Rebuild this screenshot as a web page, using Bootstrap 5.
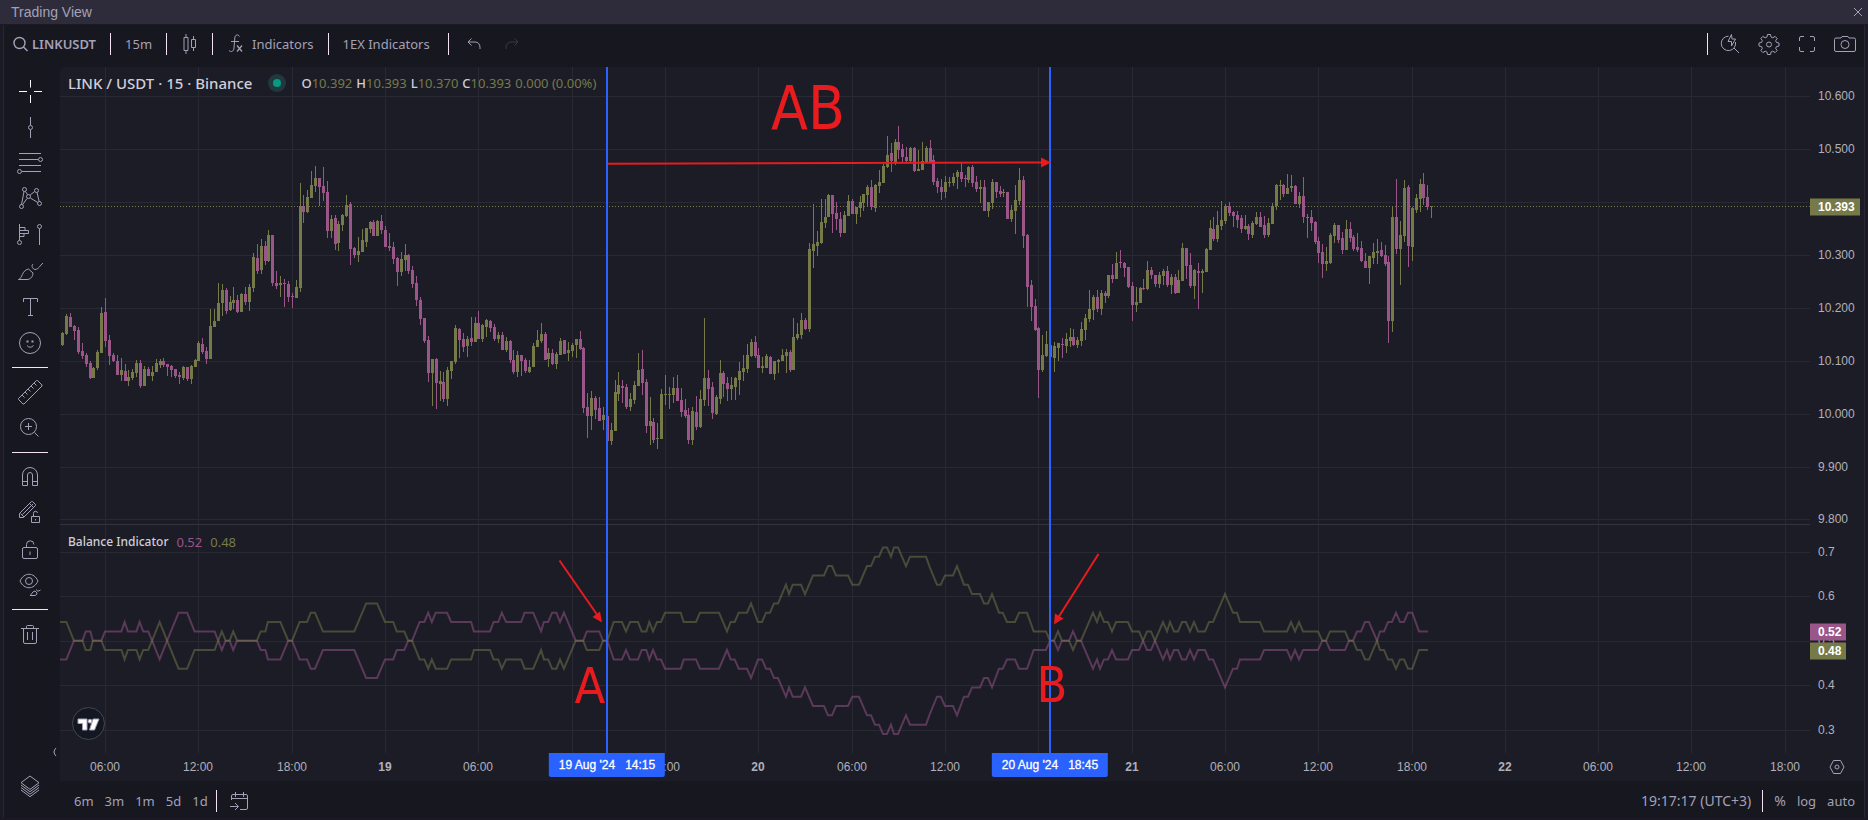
<!DOCTYPE html>
<html lang="en">
<head>
<meta charset="utf-8">
<meta name="viewport" content="width=device-width, initial-scale=1">
<title>Trading View</title>
<link href="https://cdn.jsdelivr.net/npm/bootstrap@5.3.0/dist/css/bootstrap.min.css" rel="stylesheet">
<style>
:root{--ink:#a3a1b8;--panel:#171720;--plot:#1c1c27;--grid:#292934;--edge:#272632;--up:#767a49;--down:#9a5589;--blue:#2962ff;--red:#e81b1e}
body{background:#1a1924;color:var(--ink);font-family:"Noto Sans",sans-serif;font-size:13px;line-height:20px}
svg{display:block;fill:none;stroke:currentColor}
button{color:inherit;background:none;border:0;padding:0;font:inherit;white-space:nowrap}
.titlebar{height:24px;background:#2e2c3a;padding:0 4px 0 11px;font:14px/24px "Liberation Sans",sans-serif}
.frame{margin:1px 3px 2px;border:1px solid var(--edge);border-width:0 1px;background:var(--panel);min-height:0}
.toolbar{height:42px;padding:0 8px 4px 8px}
.rule{width:1px;height:22px;background:#f6e2f4;flex:none}
.gap-rule{margin:0 14px}
.tools-end{gap:18px}
.sidebar{width:56px;padding:6px 12px 15px 8px}
.sidebar hr{width:36px;height:1px;margin:6px 0;border:0;background:#f6e2f4;opacity:1;flex:none}
.sidebar button{width:36px;height:36px;flex:none}
.collapse-btn{left:46px;bottom:58px;width:8px!important;height:16px!important}
.chart{display:grid;grid-template-columns:minmax(0,1fr) 54px;grid-template-rows:minmax(0,1fr) 28px;background:var(--plot);border-top-left-radius:5px}
.axis{font:12px/16px "Liberation Sans",sans-serif;color:#b0b0ba}
.axis span{position:absolute;white-space:nowrap}
.price span{left:0;padding-left:8px;transform:translateY(-50%)}
.price .tag{color:#fff;font-weight:700;line-height:17px;padding-right:5px}
.time span{top:6px;transform:translateX(-50%)}
.time .tag{top:0;background:var(--blue);color:#fff;line-height:24px;padding:0 10px;white-space:pre;border-radius:0 0 2px 2px;-webkit-text-stroke:.3px}
.legend{left:8px;top:6px}
.legend h1{font-size:15px;line-height:20px;font-weight:500;color:#cfced9;margin:0 16px 0 0}
.legend b,.study b{font-weight:500;color:#cfced9}
.study b{font-size:12px}
.status{width:18px;height:18px;background:#20393f;margin-right:15px}
.status i{width:8px;height:8px;background:#089981}
.ohlc{gap:4px}
.study{left:8px;top:68%;margin-top:-1px;gap:8px}
.up{color:var(--up)}.down{color:var(--down)}
.logo{left:12px;bottom:13px;width:33px;height:33px;background:#131722;border:1px solid #454651;border-radius:50%}
.note{position:absolute;transform:translate(-50%,-50%);color:var(--red);font-family:"DejaVu Sans Condensed","DejaVu Sans Mono",sans-serif;font-stretch:normal;line-height:1}
.note-lg{font-size:60px}.note-sm{font-size:50px}
.footer-bar{height:37px;padding:3px 9px 0 14px}
.foot-group{gap:11px}
.clock{font-size:14px}
</style>
</head>
<body class="d-flex flex-column vh-100 overflow-hidden">
<header class="titlebar d-flex justify-content-between align-items-center flex-shrink-0">
  <span>Trading View</span>
  <button aria-label="Close"><svg width="12" height="12"><path d="M2 2l8 8M10 2l-8 8"/></svg></button>
</header>
<main class="frame d-flex flex-column flex-grow-1">
  <nav class="toolbar d-flex align-items-center flex-shrink-0">
    <button class="d-flex align-items-center fw-semibold"><svg class="me-1" width="16" height="18"><circle cx="7.500" cy="8" r="5.500" stroke-width="1.400"/><path d="M11.500 12l4 4" stroke-width="1.400"/></svg>LINKUSDT</button>
    <span class="rule gap-rule"></span>
    <button>15m</button>
    <span class="rule gap-rule"></span>
    <button aria-label="Candles"><svg width="17" height="22"><path d="M5 1v3M5 18v3M12.500 3v3M12.500 15v3"/><path d="M3 4.500h4v13H3zM10.500 6.500h4v8h-4z"/></svg></button>
    <span class="rule gap-rule"></span>
    <button class="d-flex align-items-center"><svg class="me-2" width="17" height="22"><path d="M12.500 3.500C11 1 8 1.500 7.800 5L7 15c-.2 3.500-3 4.500-5 2.500M4 8.500h8"/><path d="M10 12.500l5 6M15 12.500l-5 6" stroke-width="1.300"/></svg>Indicators</button>
    <span class="rule gap-rule"></span>
    <button class="pe-1">1EX Indicators</button>
    <span class="rule gap-rule"></span>
    <button aria-label="Undo" class="ms-1"><svg width="14" height="14"><path d="M4.500 1.500L1 5l3.500 3.500M1 5h7c3 0 5 2 5 5.500V12"/></svg></button>
    <button aria-label="Redo" class="ms-4 opacity-25"><svg width="14" height="14"><path d="M9.500 1.500L13 5 9.500 8.500M13 5H6c-3 0-5 2-5 5.500V12"/></svg></button>
    <div class="tools-end ms-auto d-flex align-items-center">
      <div class="d-flex align-items-center gap-2"><span class="rule me-1"></span>
      <button aria-label="Quick search"><svg width="20" height="22"><path d="M8.500 3.200A7.200 7.200 0 1 0 15.500 9M14 15l5 5M11.500 1.500L8 8.500h3.500v4.500l4-7H12z"/></svg></button></div>
      <button aria-label="Settings"><svg width="22" height="22"><path d="M9.500 1.500h3l.6 2.600 1.700.7 2.300-1.400 2 2-1.400 2.300.7 1.700 2.600.6v3l-2.600.6-.7 1.700 1.400 2.300-2 2-2.300-1.400-1.700.7-.6 2.600h-3l-.6-2.600-1.700-.7-2.300 1.400-2-2 1.400-2.300-.7-1.700L1 13v-3l2.600-.6.7-1.700-1.400-2.300 2-2 2.300 1.400 1.700-.7z"/><circle cx="11" cy="11.500" r="2.500"/></svg></button>
      <button aria-label="Fullscreen"><svg width="18" height="18"><path d="M1.500 6V3a1.500 1.500 0 0 1 1.500-1.500h3M12 1.500h3A1.500 1.500 0 0 1 16.500 3v3M16.500 12v3a1.500 1.500 0 0 1-1.500 1.500h-3M6 16.500H3A1.500 1.500 0 0 1 1.500 15v-3"/></svg></button>
      <button aria-label="Snapshot"><svg width="22" height="18"><path d="M7 3l1-1.500h6L15 3h5a1.500 1.500 0 0 1 1.500 1.500V15a1.500 1.500 0 0 1-1.500 1.500H2A1.500 1.500 0 0 1 .5 15V4.500A1.500 1.500 0 0 1 2 3z"/><circle cx="11" cy="9.500" r="4"/></svg></button>
    </div>
  </nav>
  <div class="d-flex flex-grow-1" style="min-height:0">
    <aside class="sidebar position-relative d-flex flex-column flex-shrink-0">
      <button aria-label="Cross" class="text-white"><svg width="36" height="36"><path d="M18.500 7v7.500M18.500 22v8M7 18.500h8M22 18.500h8"/></svg></button>
      <button aria-label="Trend line"><svg width="36" height="36"><path d="M18.500 8v8M18.500 21v8"/><circle cx="18.500" cy="18.500" r="2"/></svg></button>
      <button aria-label="Fibonacci"><svg width="36" height="36"><path d="M7 8.500h22M7 14.500h19M7 20.500h22M10 26.500h19"/><circle cx="28.500" cy="14.500" r="2"/><circle cx="7.500" cy="26.500" r="2"/></svg></button>
      <button aria-label="Patterns"><svg width="36" height="36"><path d="M12 10.500l-2.500 13M13.500 10.500l2 3M18.200 14l4.500-3.500M25 11.500l2.200 9M18.300 17l7.500 4.500M15 17.500l-4.500 6.300"/><circle cx="12.500" cy="8.500" r="2"/><circle cx="24.500" cy="9.500" r="2"/><circle cx="16.500" cy="15.500" r="2"/><circle cx="9.500" cy="25.500" r="2"/><circle cx="27.500" cy="22.500" r="2"/></svg></button>
      <button aria-label="Position"><svg width="36" height="36"><path d="M7.500 7v16.500M8 10.500h5v3H8M13 13.500h3.500v3H8M12 16.500v3H8M27.500 12v16"/><circle cx="7.500" cy="25.500" r="2"/><circle cx="27.500" cy="9.500" r="2"/></svg></button>
      <button aria-label="Brush"><svg width="36" height="36"><path d="M6.500 26.500c4-1 3-9 10-10.500l4.500 4c0 4-3 6.500-6 6.500zM21 11c-2 2-.5 5 2 5.500 3.500 0 5-4 8-6.500"/></svg></button>
      <button aria-label="Text"><svg width="36" height="36"><path d="M11.500 13V9.500h14V13M18.500 9.500v17M16 26.500h5"/></svg></button>
      <button aria-label="Emoji"><svg width="36" height="36"><circle cx="18" cy="18" r="10.500"/><path d="M15 20.500q3 3.500 6.500 0"/><path d="M14.500 16.500h2M19.500 16.500h2" stroke-width="2"/></svg></button>
      <hr>
      <button aria-label="Measure"><svg width="36" height="36"><path d="M6.500 24.500l18-18h1l4.500 4.500v1l-18 18h-1l-4.500-4.500zM10 21l2.500 2.500M13 18l2.500 2.500M16 15l2.500 2.500M19 12l2.500 2.500M22 9l2.500 2.500"/></svg></button>
      <button aria-label="Zoom in"><svg width="36" height="36"><circle cx="16.500" cy="16.500" r="8"/><path d="M22.500 22.500l4 4M13 16.500h7M16.500 13v7"/></svg></button>
      <hr>
      <button aria-label="Magnet"><svg width="36" height="36"><path d="M10.500 26.500V16a7.500 7.500 0 0 1 15 0v10.500h-5V16a2.500 2.500 0 0 0-5 0v10.500zM10.500 22.500h5M20.500 22.500h5"/></svg></button>
      <button aria-label="Stay in drawing mode"><svg width="36" height="36"><path d="M7.500 22.500v-4L19.500 6.500h1L23.500 9.500v1l-12 12zM8.500 18.500l3.500 3.500M10.500 19.500L21 9M17.500 8.500l4 4M19.500 21.500h8v6h-8zM21.500 21.500v-3a2 2 0 0 1 4-.5M23.500 24v1.500"/></svg></button>
      <button aria-label="Lock drawings"><svg width="36" height="36"><rect x="10.500" y="16.500" width="15" height="11" rx="1.500"/><path d="M14.500 16.500v-3a3.700 3.700 0 0 1 7.400 0M18 20.500v3.500"/></svg></button>
      <button aria-label="Hide drawings"><svg width="36" height="36"><path d="M8 14c4-9 14-9 18 0-4 9-14 9-18 0z"/><circle cx="17" cy="14" r="3.500"/><path d="M18 28.500c2-.5 1.500-4 5-4.500l2 2c0 2-1.500 2.500-3 2.500zM24.500 22.500c0 2 2 2 4 .5" /></svg></button>
      <hr>
      <button aria-label="Remove"><svg width="36" height="36"><path d="M9 12.500h18M14.500 12.500v-2q0-1 1-1h5q1 0 1 1v2M11.500 12.500v13.500q0 1.500 1.500 1.500h10q1.500 0 1.500-1.500V12.500M15.500 16v8M20.500 16v8"/></svg></button>
      <button aria-label="Collapse" class="collapse-btn position-absolute"><svg width="8" height="16"><path d="M6 4Q2 8 6 12"/></svg></button>
      <button aria-label="Object tree" class="mt-auto"><svg width="36" height="36"><path d="M18 9l9 6.700-9 6.700-9-6.700zM9 18l9 6.700 9-6.700M9 20.500l9 6.700 9-6.700M9 23l9 6.700 9-6.700"/></svg></button>
    </aside>
    <section class="d-flex flex-column flex-grow-1">
      <div class="chart flex-grow-1">
        <div class="position-relative overflow-hidden" id="plot">
          <svg id="canvas" class="w-100 h-100" viewBox="60 67 1750 686" preserveAspectRatio="none"></svg>
          <div class="legend position-absolute d-flex align-items-center">
            <h1>LINK / USDT · 15 · Binance</h1>
            <span class="status rounded-circle d-flex align-items-center justify-content-center"><i class="rounded-circle"></i></span>
            <div class="ohlc d-flex up"><span><b>O</b>10.392</span><span><b>H</b>10.393</span><span><b>L</b>10.370</span><span><b>C</b>10.393</span><span>0.000 (0.00%)</span></div>
          </div>
          <div class="study position-absolute d-flex"><b>Balance Indicator</b><span class="down">0.52</span><span class="up">0.48</span></div>
          <div class="logo position-absolute"><svg width="31" height="31" stroke="none"><path fill="#fff" d="M5 11h9v11H9.500v-6.500H5zM20 11h6l-4.500 11h-5z"/><circle cx="17" cy="13.200" r="1.900" fill="#fff"/></svg></div>
        </div>
        <div class="axis price position-relative" id="prices"></div>
        <div class="axis time position-relative" id="times"></div>
        <button aria-label="Axis settings" class="d-flex justify-content-center align-items-center"><svg width="18" height="16"><path d="M5.500 1.500h7l3.500 6.500-3.500 6.500h-7L2 8z"/><circle cx="9" cy="8" r="2"/></svg></button>
      </div>
      <footer class="footer-bar d-flex align-items-center flex-shrink-0">
        <div class="foot-group d-flex"><button>6m</button><button>3m</button><button>1m</button><button>5d</button><button>1d</button></div>
        <span class="rule mx-2"></span>
        <button aria-label="Go to date" class="ms-1"><svg width="20" height="20"><path d="M2.500 9V5A1.500 1.500 0 0 1 4 3.500h13A1.500 1.500 0 0 1 18.500 5v12a1.500 1.500 0 0 1-1.500 1.500h-6M2.500 7.500h16M6.500 1v5M14.500 1v5M1 15.500h8M6 12l3.500 3.500L6 19"/></svg></button>
        <div class="foot-group ms-auto d-flex align-items-center"><button class="clock">19:17:17 (UTC+3)</button><span class="rule"></span><button class="clock">%</button><button>log</button><button>auto</button></div>
      </footer>
    </section>
  </div>
</main>
<script src="https://cdn.jsdelivr.net/npm/bootstrap@5.3.0/dist/js/bootstrap.bundle.min.js"></script>
<script>
// Plot space: x 60..1810, y 67..753. Candle rows hold high, body top, body bottom and low in thirds of a unit.
const candles=[
[450,`u546 549 585 588|u492 498 552 555|d489 501 531 531|d525 528 543 570|d531 540 606 612|d579 603 618 627|d609 615 642 651|d633 639 684 687|u651 654 684 684|u600 606 654 660|u471 489 609 609|d444 486 573 591|d555 570 618 645|d609 615 633 636|d615 633 675 675|u624 660 675 693|d642 663 693 693|u660 681 693 708|u657 666 684 690|u630 639 669 681|d630 639 708 714|u648 657 708 708|d651 657 678 678|u648 666 678 693|u627 639 666 666|u627 633 645 654|d624 633 645 651|d642 642 651 678|d645 648 660 681|d657 657 678 684|d666 675 681 702|u648 651 684 690|d651 651 687 693|u645 648 687 702|u627 630 651 651|u573 579 633 633|d564 582 606 612|d591 603 627 642|u477 528 627 627|u477 513 531 531|u399 459 513 513|u402 420 459 498|d414 420 483 492|u438 456 480 483|u411 450 459 477|d435 450 486 489|u429 432 486 486|d411 432 456 465|u402 411 456 483|u309 321 414 426|d282 324 363 372|u267 288 360 372|d273 288 333 345|u240 255 333 336|d255 255 399 408|d363 399 408 417|u378 399 405 441|d387 399 402 471|d393 402 441 456|d429 438 441 474|u390 411 444 444|u99 168 414 426|d135 168 186 219|u120 141 186 189|u63 105 144 144|u48 84 108 126|d84 84 111 168|d51 108 129 153|d93 126 243 264|u195 207 243 264|d195 204 282 300|u213 222 279 303|u192 195 225 243|u135 165 198 201|d156 162 297 345|d291 294 315 324|u261 303 315 336|u237 270 306 306|u234 234 276 291|u213 216 237 249|d210 216 258 258|u210 213 258 258|d195 213 240 252|d228 240 291 291|d249 288 294 303|d276 291 327 342|d321 324 366 408|u306 327 366 378|u282 315 330 363|d312 315 363 372|d348 360 402 414|d378 399 450 468`],
[840,`d51 60 117 135|d114 114 183 189|d168 180 279 306|u237 237 279 378|d234 237 309 387|u273 303 312 363|d276 306 357 366|u261 270 357 378|u243 243 273 297|u135 144 246 252|d144 147 180 234|d159 177 201 216|u168 177 198 231|d111 174 186 198|u111 129 186 186|d93 129 177 177|u132 135 177 186|u117 120 141 171|d120 123 144 156|d132 141 177 183|u156 165 177 189|d156 165 210 210|u171 183 210 216|d180 183 240 249|d210 240 276 282|u213 225 276 291|d225 225 243 288|d234 240 273 279|u240 261 276 279|u189 198 261 261|u150 180 201 201|u129 162 183 189|d156 162 240 240|u204 219 237 261|d207 219 252 255|u216 222 252 267|u174 183 225 225|d180 180 222 222|u186 210 219 243|u189 195 213 231|u177 177 195 234|d153 177 207 210|d201 204 384 399|d339 381 408 474|u333 354 408 450|d348 354 390 417|d351 384 423 423|u381 405 420 450|d408 408 483 483|u429 450 483 495|u300 336 453 453|u276 315 342 363|d300 318 324 369|d312 321 381 387|u339 357 381 393|u303 315 360 372|u219 270 318 318|d210 267 309 345|d297 306 438 459|u351 423 438 495|d414 426 480 489|u429 474 477 507|u327 342 477 477|u285 342 345 375|u321 342 345 387|u291 324 345 369|d285 324 363 363|d324 360 396 411|d357 390 408 414|d384 405 480 492|u381 393 480 495|d348 396 441 450|u330 357 441 444|u114 294 360 378|d270 294 327 378|d306 321 399 417|u345 351 402 405|u240 279 357 372|d273 279 312 351|d291 309 327 363|u291 315 327 360|u291 294 321 360|u246 273 300 345|u225 264 276 303|u192 225 267 279|u177 186 228 231|d168 186 228 234|d204 225 264 264`],
[210,`u861 888 894 909|u852 858 894 894|d858 861 912 912|u873 873 912 930|u867 870 876 909|u837 855 873 873|u837 846 858 909|d840 846 900 906|u744 801 900 900|u759 792 804 810|u729 750 795 807|d744 750 777 780|u519 537 777 786|u402 522 543 594|u483 516 528 558|u387 456 519 522|u387 441 459 474|u372 375 441 441|d375 375 432 489|d396 429 447 480|d426 447 489 501|u423 435 489 489|u375 393 438 438|d387 393 432 432|u411 411 432 462|u378 396 414 441|u372 372 399 423|u345 351 375 408|d330 351 411 420|u342 345 414 426|u300 336 348 369|u282 288 339 339|u198 255 291 294|d219 249 273 306|u207 216 279 285|d168 216 240 267|d222 237 261 276|d231 261 273 276|u231 234 273 276|d231 234 303 306|u240 297 303 303|u216 273 300 300|u228 234 276 276|d210 234 276 279|d255 270 336 345|d324 333 351 369|d327 351 366 390|u318 336 366 384|u321 336 339 351|u309 321 339 348|u300 306 321 357|d279 306 327 336|d315 324 327 351|u288 291 330 339|d285 291 339 351|d318 336 357 366|u330 351 357 399|d330 351 423 423|u396 396 423 441|u327 336 399 417|d336 336 366 384|d348 363 372 381|u357 366 369 381|d366 366 447 447|u405 420 447 456|u345 390 423 492|u294 330 393 405|d318 330 498 534|d492 495 651 711|d630 645 711 753|d687 708 780 783|d771 774 900 984|u795 855 900 906|u783 822 858 861`],
[450,`d585 585 621 621|u576 588 624 666|u579 579 594 633|d564 582 585 624|u549 567 588 609|u534 561 573 591|d537 561 585 588|u561 570 585 594|u516 537 573 588|u492 504 540 570|u420 477 507 516|u435 441 480 510|d420 441 477 486|u420 429 477 495|d423 429 438 459|u375 375 438 444|d342 375 387 399|u306 339 387 387|d300 336 339 354|d336 339 354 381|d351 351 411 414|d396 408 465 513|u411 456 465 486|u411 414 459 459|d387 414 417 420|u333 360 417 420|d351 360 375 387|d375 375 402 411|u366 375 402 414|u357 363 378 405|d348 363 405 411|u372 381 405 432|d372 381 429 432|u360 390 429 429|u279 294 393 393|d294 294 348 387|d309 345 408 414|u357 360 408 447|d339 363 369 477|u357 363 369 429|u294 297 366 366|u210 234 300 300|d201 237 267 273|u183 225 267 276|u153 210 228 240|u162 168 213 222|d156 168 189 198|d183 186 198 231|d183 195 210 234|d195 204 237 249|u195 228 237 240|d222 228 252 270|u213 219 255 264|u186 201 222 225|d186 201 231 231|d198 225 255 264|u204 219 255 261|u159 168 222 222|u102 105 168 180|u90 105 108 150|d102 105 132 141|u72 114 132 132|u75 108 114 126|d105 108 162 162|u126 138 162 174|d81 138 201 219|u192 201 204 264|d180 201 219 243|d213 216 276 282|d261 273 309 339|d282 306 342 384|u291 333 342 363|u249 255 339 342|u219 225 258 279|d225 225 270 279|d246 264 300 312|u210 237 300 300|d216 237 264 276|d255 261 297 303|d249 291 300 306|d273 294 333 336|d309 333 354 354|u318 318 354 402|u279 306 324 342|u267 303 309 342|d276 300 318 321|d285 315 342 348|d318 336 513 579|u168 201 513 546|d87 201 297 312|u213 255 297 405|u90 114 258 276|d105 111 288 351|u171 174 291 333|u132 144 180 189|u87 102 147 186|d69 102 144 165|d105 141 171 180|u168 168 171 204`]];
// Indicator: start, units per step, then "offset,level" pairs. The second line mirrors the first.
const balance=[
[60,2.8,`0,2 18,2 39,0 63,0 72,-1 85,-1 92,0 116,0 126,-1 172,-1 181,-2 190,-1 214,-1 223,-2 233,-1 247,-1 258,0 279,2 300,0 332,-3 356,-3 377,-1 433,-1 443,0 453,1 464,0 475,0 485,1 496,0 551,0 562,1 575,1 582,2 617,2 639,0 650,0 671,2 692,2 702,3 714,3 736,1 824,1 857,4 888,4 910,2 933,2 943,1 964,1 975,0 986,0 1007,-2 1020,-2 1031,-3 1041,-2 1052,-3 1084,-3 1095,-2 1151,-2 1159,-1 1204,-1 1214,-2 1227,-2 1237,-3 1249,-2 1291,-2 1301,-3 1325,-3 1347,-1 1355,-2 1367,-2 1378,-3 1390,-3 1400,-2 1411,-3 1444,0 1465,0 1475,-1 1510,-1 1520,0`],
[600,3,`22,0 41,2 66,2 78,1 90,2 114,2 125,1 139,1 148,2 159,1 171,2 183,2 195,3 242,3 251,2 288,2 300,3 357,3 381,1 392,2 404,2 416,3 441,3 453,4 474,2 486,2 498,3 510,3 522,4 534,4 558,6 567,5 578,6 603,6 615,5 639,7 672,7 684,8 696,8 708,7 744,7 757,6 777,6 801,8 813,8 825,9 837,9 849,10 861,10 873,9 882,10 894,10 918,8 930,9 978,9 990,7.8 1011,6 1022,6 1035,7 1059,7 1071,8 1092,6 1104,6 1116,5 1140,5 1152,4 1164,4 1176,5 1197,3 1208,3 1221,2 1245,2 1257,3 1281,3 1301,1 1338,1 1350,0 1362,0 1374,1 1386,0 1407,0 1419,-1 1431,0`],
[1050,3,`93,0 129,3 141,2 150,3 162,2 174,2 186,1 198,2 234,2 246,1 267,1 279,0 291,1 303,1 315,0 339,2 351,1 360,2 372,1 384,1 396,2 408,2 420,1 432,2 444,1 465,1 477,2 489,2 525,5 549,3 561,3 570,2 630,2 642,1 711,1 723,2 735,1 747,2 759,1 804,1 817,0 828,0 840,1 885,1 897,0 909,0 921,-1 933,-1 945,-2 957,-2 981,0 990,-1 1002,-1 1014,-2 1026,-2 1038,-3 1050,-2 1062,-2 1074,-3 1087,-3 1107,-1 1134,-1`]];
const hours=[[105,'06:00'],[198,'12:00'],[292,'18:00'],[385,'19'],[478,'06:00'],[572,''],[665,'18:00'],[758,'20'],[852,'06:00'],[945,'12:00'],[1038,''],[1132,'21'],[1225,'06:00'],[1318,'12:00'],[1412,'18:00'],[1505,'22'],[1598,'06:00'],[1691,'12:00'],[1785,'18:00']];
const levels=[[96,'10.600'],[149,'10.500'],[202,''],[255,'10.300'],[308,'10.200'],[361,'10.100'],[414,'10.000'],[467,'9.900'],[519,'9.800'],[552,'0.7'],[596,'0.6'],[641,'0.5'],[685,'0.4'],[730,'0.3']];
const px=x=>(x-60)/17.5+'%', py=y=>(y-67)/6.86+'%';
const rect=(x,y,w,h,f)=>`<rect x="${x}" y="${y}" width="${w}" height="${h}" fill="${f}"/>`;
let crisp='';
hours.forEach(([x])=>crisp+=rect(x,67,1,686,'var(--grid)'));
levels.forEach(([y])=>crisp+=rect(60,y,1750,1,'var(--grid)'));
crisp+=rect(60,524,1750,1,'#303440');
crisp+='<path d="M60 206.500H1810" stroke="var(--up)" stroke-dasharray="1 2"/>';
let n=0;
candles.forEach(([base,rows])=>rows.split('|').forEach(r=>{
  const c=r[0]==='u'?'var(--up)':'var(--down)';
  const [h,t,b,l]=r.slice(1).split(' ').map(v=>Math.round((+v+base)/3));
  const x=Math.floor(62.8+n++*280/72);
  crisp+=rect(x,h,1,l-h,c)+rect(x-1,t,3,b-t,c);
}));
const line=s=>balance.flatMap(([x0,k,pts])=>pts.split(' ').map(p=>{const [x,v]=p.split(',');return (x0+x/k).toFixed(1)+','+(640.7-s*v*9.33).toFixed(1)})).join(' ');
document.getElementById('canvas').innerHTML=`<g stroke="none" shape-rendering="crispEdges">${crisp}</g>
<g stroke-width="2"><polyline points="${line(-1)}" stroke="var(--down)" stroke-opacity=".5"/><polyline points="${line(1)}" stroke="var(--up)" stroke-opacity=".5"/></g>
<g stroke="none">${rect(606,67,2,686,'var(--blue)')}${rect(1049,67,2,686,'var(--blue)')}</g>
<g stroke="var(--red)" stroke-width="2"><path d="M608 163.700L1042 162.500M559.500 560.500L598 616M1098.500 554L1058 618"/></g>
<g stroke="none" fill="var(--red)"><path d="M1041 157.500L1051 162.500 1041 167.500zM602 622.500L592.500 617 600 611.500zM1054 624.500L1055 613.500 1063.500 618.500z"/></g>`;
const put=(id,html)=>document.getElementById(id).insertAdjacentHTML('beforeend',html);
levels.forEach(([y,t])=>t&&put('prices',`<span style="top:${py(y)}">${t}</span>`));
[[206.5,'10.393','up'],[631.5,'0.52','down'],[650.5,'0.48','up']].forEach(([y,t,c])=>put('prices',`<span class="tag" style="top:${py(y)};background:var(--${c})">${t}</span>`));
hours.forEach(([x,t])=>t&&put('times',`<span class="${t.length<3?'fw-bold':''}" style="left:${px(x)}">${t}</span>`));
[[607,"19 Aug '24   14:15"],[1050,"20 Aug '24   18:45"]].forEach(([x,t])=>put('times',`<span class="tag" style="left:${px(x)}">${t}</span>`));
[[808,108,'AB','lg'],[590,686,'A','sm'],[1052,685,'B','sm']].forEach(([x,y,t,s])=>put('plot',`<span class="note note-${s}" style="left:${px(x)};top:${py(y)}">${t}</span>`));
</script>
</body>
</html>
